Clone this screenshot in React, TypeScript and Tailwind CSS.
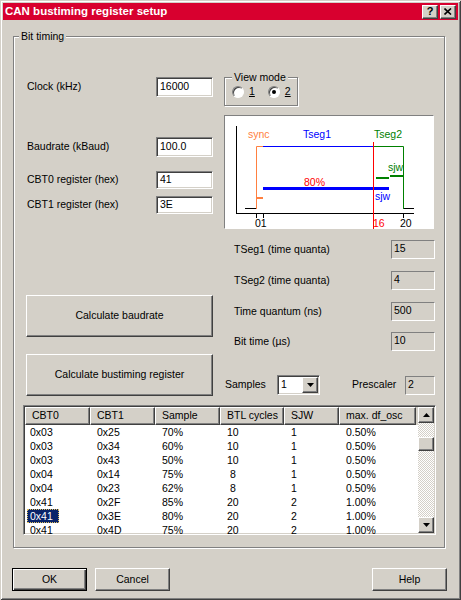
import React from "react";

const sunken =
  "border border-t-[#808080] border-l-[#808080] border-b-white border-r-white shadow-[inset_1px_1px_0_#404040,inset_-1px_-1px_0_#d4d0c8]";
const raised =
  "border border-t-white border-l-white border-b-[#404040] border-r-[#404040] shadow-[inset_-1px_-1px_0_#808080]";
const etched = "border border-[#808080] shadow-[inset_1px_1px_0_#fff,1px_1px_0_#fff]";
const flat = "border border-t-[#808080] border-l-[#808080] border-b-white border-r-white";

const cols = [65, 65, 65, 64, 55, 77];
const heads = ["CBT0", "CBT1", "Sample", "BTL cycles", "SJW", "max. df_osc"];
const rows = [
  ["0x03", "0x25", "70%", "10", "1", "0.50%"],
  ["0x03", "0x34", "60%", "10", "1", "0.50%"],
  ["0x03", "0x43", "50%", "10", "1", "0.50%"],
  ["0x04", "0x14", "75%", " 8", "1", "0.50%"],
  ["0x04", "0x23", "62%", " 8", "1", "0.50%"],
  ["0x41", "0x2F", "85%", "20", "2", "1.00%"],
  ["0x41", "0x3E", "80%", "20", "2", "1.00%"],
  ["0x41", "0x4D", "75%", "20", "2", "1.00%"],
];

function Arrow({ down }: { down?: boolean }) {
  return (
    <svg width="7" height="4" viewBox="0 0 7 4">
      <path d={down ? "M0 0h7L3.5 4z" : "M0 4h7L3.5 0z"} fill="#000" />
    </svg>
  );
}

function InputRow({ label, value, h }: { label: string; value: string; h: string }) {
  return (
    <div className={`flex items-center justify-between ${h}`}>
      <span className="pl-[1px]">{label}</span>
      <div className={`w-[57px] h-full bg-white pl-[3px] flex items-center ${sunken}`}>{value}</div>
    </div>
  );
}

function InfoRow({ label, value, mt }: { label: string; value: string; mt: string }) {
  return (
    <div className={`flex items-center h-[19px] ${mt}`}>
      <span className="pl-[10px]">{label}</span>
      <div className={`ml-auto w-[44px] h-full pl-[2px] leading-[15px] ${flat}`}>{value}</div>
    </div>
  );
}

function Radio({ on }: { on?: boolean }) {
  return (
    <div className="w-[12px] h-[12px] rounded-full bg-white border border-t-[#808080] border-l-[#808080] border-b-white border-r-white flex items-center justify-center shadow-[inset_1px_1px_0_#404040]">
      {on && <div className="w-[4px] h-[4px] rounded-full bg-black" />}
    </div>
  );
}

function Diagram() {
  const f = "'Liberation Sans', Arial, sans-serif";
  return (
    <svg width="209" height="113" viewBox="225 116 209 113" className="block">
      <g fill="none" strokeWidth="1">
        <path d="M236.5 126V214M236 213.5H414" stroke="#000" />
        <path d="M256.5 213V218M263.5 213V218M403.5 213V218" stroke="#000" />
        <path d="M245 208.5H256M403 208.5H414" stroke="#000" />
        <path d="M256.5 209V146.5H263" stroke="#ff8040" />
        <path d="M263 146.5H373" stroke="#0000ff" />
        <path d="M373 146.5H403.5V209" stroke="#008000" />
      </g>
      <rect x="257" y="197" width="6" height="2" fill="#ff8040" />
      <rect x="263" y="187" width="126" height="3" fill="#0000ff" />
      <rect x="376" y="177" width="13" height="2" fill="#008000" />
      <rect x="390" y="175" width="13" height="2" fill="#008000" />
      <path d="M373.5 142V229" stroke="#ff0000" />
      <g fontFamily={f} fontSize="10.5">
        <text x="248" y="138" fill="#ff8040">sync</text>
        <text x="303" y="138" fill="#0000ff">Tseg1</text>
        <text x="374" y="138" fill="#008000">Tseg2</text>
        <text x="304" y="186" fill="#ff0000">80%</text>
        <text x="388" y="171" fill="#008000">sjw</text>
        <text x="375" y="200" fill="#0000ff">sjw</text>
        <text x="255" y="227" fill="#000">01</text>
        <text x="373" y="227" fill="#ff0000">16</text>
        <text x="400" y="227" fill="#000">20</text>
      </g>
    </svg>
  );
}

export default function App() {
  return (
    <div className="w-[461px] h-[600px] bg-[#d4d0c8] p-[3px] flex flex-col text-[10.5px] text-black font-['Liberation_Sans',Arial,sans-serif] shadow-[inset_1px_1px_0_#d4d0c8,inset_-1px_-1px_0_#404040,inset_2px_2px_0_#fff,inset_-2px_-2px_0_#808080]">
      {/* title bar */}
      <div className="h-[17px] bg-[#d8002f] flex items-center pl-[2px] pr-[2px]">
        <span className="text-white font-bold text-[11.5px]">CAN bustiming register setup</span>
        <div className="ml-auto flex gap-[2px]">
          <div className={`w-[16px] h-[14px] bg-[#d4d0c8] flex items-center justify-center font-bold text-[11px] leading-none ${raised}`}>
            ?
          </div>
          <div className={`w-[16px] h-[14px] bg-[#d4d0c8] flex items-center justify-center ${raised}`}>
            <svg width="8" height="7" viewBox="0 0 8 7">
              <path d="M0.5 0.5L7 6.5M7 0.5L0.5 6.5" stroke="#000" strokeWidth="1.6" />
            </svg>
          </div>
        </div>
      </div>

      {/* Bit timing group */}
      <div className={`relative mt-[16px] ml-[10px] w-[432px] h-[512px] pt-[40px] pl-[12px] ${etched}`}>
        <span className="absolute left-[5px] -top-[8px] px-[2px] bg-[#d4d0c8] leading-[14px]">Bit timing</span>

        <div className="flex">
          {/* left column */}
          <div className="w-[187px] flex flex-col">
            <InputRow label="Clock (kHz)" value="16000" h="h-[20px]" />
            <div className="mt-[40px]">
              <InputRow label="Baudrate (kBaud)" value="100.0" h="h-[20px]" />
            </div>
            <div className="mt-[14px]">
              <InputRow label="CBT0 register (hex)" value="41" h="h-[18px]" />
            </div>
            <div className="mt-[7px]">
              <InputRow label="CBT1 register (hex)" value="3E" h="h-[18px]" />
            </div>
            <button className={`mt-[81px] h-[42px] bg-[#d4d0c8] ${raised}`}>Calculate baudrate</button>
            <button className={`mt-[17px] h-[42px] bg-[#d4d0c8] ${raised}`}>Calculate bustiming register</button>
          </div>

          {/* right column */}
          <div className="ml-[11px] w-[211px] flex flex-col">
            <div className={`relative w-[74px] h-[29px] flex items-center pl-[7px] ${etched}`}>
              <span className="absolute left-[7px] -top-[8px] px-[2px] bg-[#d4d0c8] leading-[14px]">View mode</span>
              <Radio />
              <span className="ml-[5px] underline">1</span>
              <div className="ml-[13px]">
                <Radio on />
              </div>
              <span className="ml-[5px] underline">2</span>
            </div>
            <div className="mt-[9px] w-[210px] h-[114px] bg-white border border-t-[#808080] border-l-[#808080] border-b-white border-r-white">
              <Diagram />
            </div>
            <InfoRow label="TSeg1 (time quanta)" value="15" mt="mt-[11px]" />
            <InfoRow label="TSeg2 (time quanta)" value="4" mt="mt-[12px]" />
            <InfoRow label="Time quantum (ns)" value="500" mt="mt-[12px]" />
            <InfoRow label="Bit time (µs)" value="10" mt="mt-[11px]" />
            <div className="mt-[24px] h-[20px] flex items-center">
              <span className="w-[53px] pl-[1px]">Samples</span>
              <div className={`w-[43px] h-full bg-white flex items-center ${sunken}`}>
                <span className="pl-[3px] flex-1">1</span>
                <div className={`w-[16px] h-[16px] mr-[1px] bg-[#d4d0c8] flex items-center justify-center ${raised}`}>
                  <Arrow down />
                </div>
              </div>
              <span className="ml-[32px]">Prescaler</span>
              <div className={`ml-auto w-[30px] h-[19px] pl-[2px] leading-[15px] ${flat}`}>2</div>
            </div>
          </div>
        </div>

        {/* table */}
        <div className={`mt-[9px] -ml-[3px] w-[413px] h-[130px] bg-white flex overflow-hidden ${sunken} border-[1px]`}>
          <div className="flex-1 flex flex-col overflow-hidden pl-[1px] pt-[1px]">
            <div className="flex h-[18px] shrink-0 bg-[#d4d0c8]">
              {heads.map((t, i) => (
                <div
                  key={t}
                  style={{ width: cols[i] }}
                  className={`h-full pl-[6px] flex items-center shrink-0 ${raised}`}
                >
                  {t}
                </div>
              ))}
            </div>
            {rows.map((r, ri) => (
              <div key={ri} className="flex h-[14px] shrink-0 leading-[14px]">
                {r.map((c, ci) => (
                  <div key={ci} style={{ width: cols[ci] }} className={`shrink-0 whitespace-pre ${ci === 0 ? "pl-[2px]" : "pl-[7px]"}`}>
                    {ci === 0 ? (
                      <span
                        className={`inline-block w-[32px] pl-[3px] ${
                          ri === 6 ? "bg-[#0a246a] text-white outline-1 outline-dotted outline-[#e0c060] -outline-offset-1" : ""
                        }`}
                      >
                        {c}
                      </span>
                    ) : (
                      c
                    )}
                  </div>
                ))}
              </div>
            ))}
          </div>
          <div className="w-[16px] flex flex-col pt-[1px] pb-[1px] mr-[1px]">
            <div className={`h-[16px] shrink-0 bg-[#d4d0c8] flex items-center justify-center ${raised}`}>
              <Arrow />
            </div>
            <div className="flex-1 bg-[image:repeating-conic-gradient(#d4d0c8_0%_25%,#ffffff_0%_50%)] bg-[length:2px_2px]">
              <div className={`mt-[14px] h-[14px] bg-[#d4d0c8] ${raised}`} />
            </div>
            <div className={`h-[16px] shrink-0 bg-[#d4d0c8] flex items-center justify-center ${raised}`}>
              <Arrow down />
            </div>
          </div>
        </div>
      </div>

      {/* bottom buttons */}
      <div className="mt-[20px] ml-[9px] mr-[11px] flex">
        <button className="w-[75px] h-[23px] bg-[#d4d0c8] border border-black shadow-[inset_1px_1px_0_#fff,inset_-1px_-1px_0_#404040,inset_-2px_-2px_0_#808080]">
          OK
        </button>
        <button className={`ml-[8px] w-[75px] h-[23px] bg-[#d4d0c8] ${raised}`}>Cancel</button>
        <button className={`ml-auto w-[75px] h-[23px] bg-[#d4d0c8] ${raised}`}>Help</button>
      </div>
    </div>
  );
}
